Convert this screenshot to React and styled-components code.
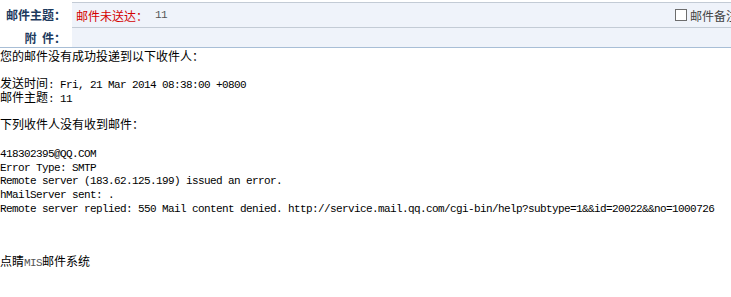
import React from "react";
import styled, { createGlobalStyle } from "styled-components";

const GlobalStyle = createGlobalStyle`
  html, body {
    margin: 0;
    padding: 0;
    background: #fff;
  }
  body {
    font-family: "Noto Sans CJK SC", "Noto Sans", sans-serif;
    font-size: 12px;
    color: #000;
    overflow: hidden;
  }
`;

const Header = styled.div`
  margin-top: 2px;
  display: grid;
  grid-template-columns: 72px 1fr;
  grid-template-rows: 25px 20px;
  border-bottom: 1px solid #a8bed6;
`;

const Label = styled.div`
  display: flex;
  align-items: center;
  justify-content: flex-end;
  padding-right: 6px;
  font-weight: bold;
  color: #1d3a5e;
  white-space: pre;
`;

const Cell = styled.div`
  display: flex;
  align-items: center;
  min-width: 0;
  background: #eff3fa;
  border-top: 1px solid #c3cbd5;
  padding-left: 4px;
`;

const Subject = styled.div`
  flex: 1;
  display: flex;
  align-items: center;
`;

const Status = styled.span`
  color: #d40000;
`;

const Mono = styled.span`
  font-family: "Liberation Mono", "Noto Sans CJK SC", monospace;
  font-size: 11px;
  letter-spacing: -0.6px;
  color: ${(p) => p.$color || "#000"};
  margin-left: ${(p) => p.$gap || 0}px;
`;

const Remark = styled.label`
  flex: 0 0 56px;
  display: flex;
  align-items: center;
  gap: 3px;
  overflow: hidden;
  white-space: nowrap;
  color: #444;
`;

const Box = styled.input.attrs({ type: "checkbox" })`
  appearance: none;
  margin: 0;
  flex: 0 0 auto;
  width: 12px;
  height: 12px;
  border: 1px solid #6d6d6d;
  background: #fff;
`;

const Body = styled.div`
  padding-top: 1px;
`;

const Line = styled.div`
  height: 13.7px;
  line-height: 13.7px;
  white-space: pre;
`;

export default function App() {
  return (
    <>
      <GlobalStyle />
      <Header>
        <Label>邮件主题：</Label>
        <Cell>
          <Subject>
            <Status>邮件未送达：</Status>
            <Mono $color="#555" $gap={7}>11</Mono>
          </Subject>
          <Remark>
            <Box />
            邮件备注
          </Remark>
        </Cell>
        <Label>{"附  件："}</Label>
        <Cell />
      </Header>
      <Body>
        <Line>您的邮件没有成功投递到以下收件人：</Line>
        <Line />
        <Line>
          发送时间<Mono>: Fri, 21 Mar 2014 08:38:00 +0800</Mono>
        </Line>
        <Line>
          邮件主题<Mono>: 11</Mono>
        </Line>
        <Line />
        <Line>下列收件人没有收到邮件：</Line>
        <Line />
        <Line><Mono>418302395@QQ.COM</Mono></Line>
        <Line><Mono>Error Type: SMTP</Mono></Line>
        <Line><Mono>Remote server (183.62.125.199) issued an error.</Mono></Line>
        <Line><Mono>hMailServer sent: .</Mono></Line>
        <Line>
          <Mono>
            Remote server replied: 550 Mail content denied. http://service.mail.qq.com/cgi-bin/help?subtype=1&&id=20022&&no=1000726
          </Mono>
        </Line>
        <Line />
        <Line />
        <Line />
        <Line>
          点睛<Mono $color="#555">MIS</Mono>邮件系统
        </Line>
      </Body>
    </>
  );
}
